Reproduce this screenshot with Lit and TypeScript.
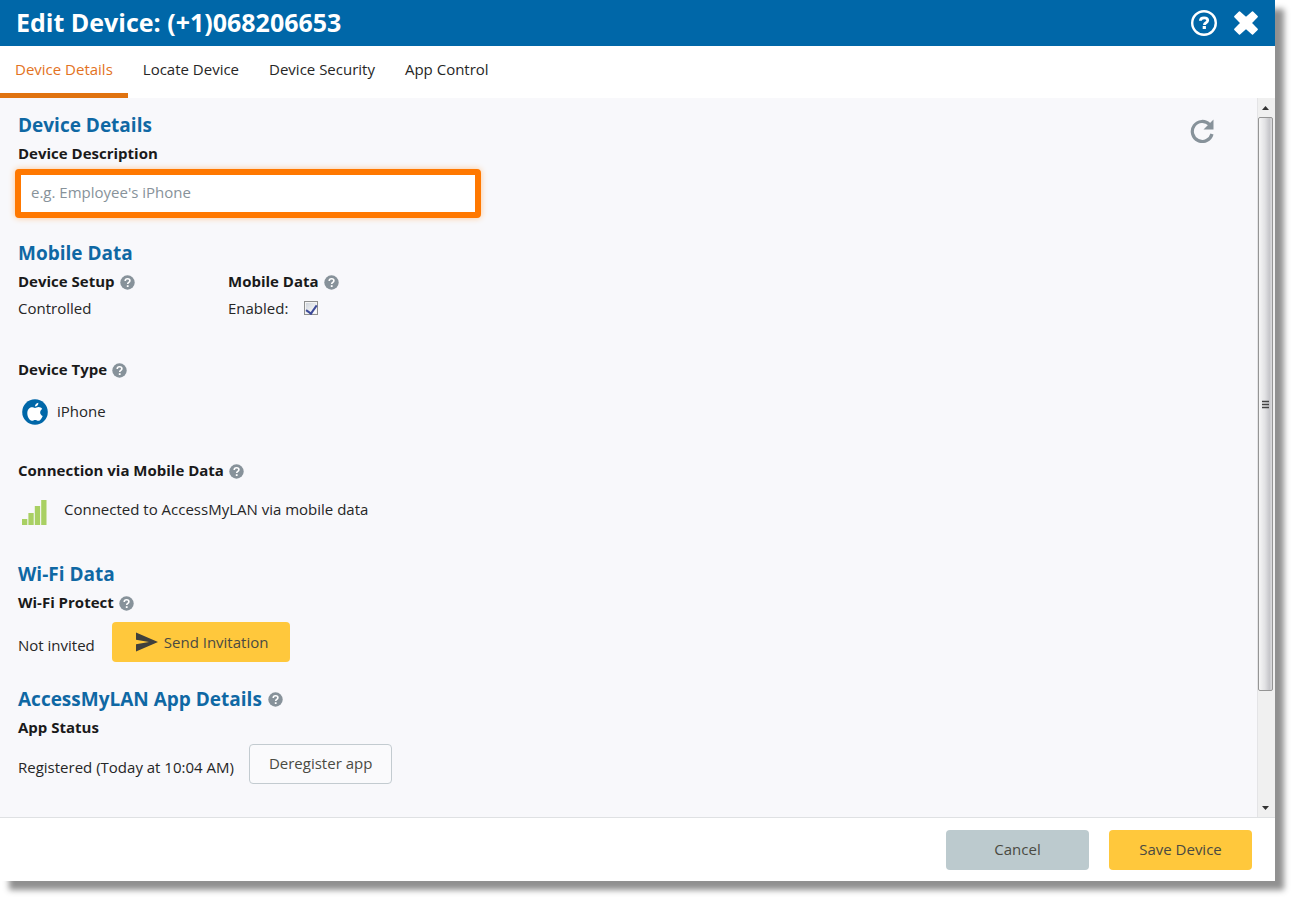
import { LitElement, html, css, svg } from "lit";
import { customElement, state } from "lit/decorators.js";

const TABS = ["Device Details", "Locate Device", "Device Security", "App Control"];

@customElement("help-button")
class HelpButton extends LitElement {
  static styles = css`
    :host {
      display: inline-flex;
    }
    .help {
      display: flex;
      padding: 0;
      border: 0;
      background: none;
      cursor: pointer;
    }
  `;

  render() {
    return html`<button class="help" type="button" aria-label="Help">
      <svg width="15" height="15" viewBox="0 0 15 15" aria-hidden="true">
        <circle cx="7.5" cy="7.5" r="7.2" fill="#87929a" />
        <path d="M5.2 5.9C5.2 4.5 6.2 3.7 7.6 3.7s2.3.8 2.3 2c0 1.7-2.2 1.7-2.2 3.3" fill="none" stroke="#fff" stroke-width="1.6" />
        <rect x="6.8" y="10.2" width="1.8" height="1.8" fill="#fff" />
      </svg>
    </button>`;
  }
}

@customElement("app-root")
class AppRoot extends LitElement {
  @state() private tab = 0;

  static styles = css`
    :host {
      display: block;
      box-sizing: border-box;
      height: 100vh;
      padding: 0 18px 18px 0;
      background: #fff;
      color: #262626;
      font: 15px/18px "Open Sans", "Noto Sans", sans-serif;
      overflow: hidden;
    }
    * {
      box-sizing: border-box;
    }
    button,
    input {
      font: inherit;
      color: inherit;
    }
    h1,
    h2,
    h3,
    p {
      margin: 0;
    }
    .dialog {
      display: flex;
      flex-direction: column;
      height: 100%;
      background: #fff;
      box-shadow: 9px 9px 6px #909090;
    }
    .titlebar {
      display: flex;
      align-items: center;
      justify-content: space-between;
      height: 46px;
      flex: none;
      padding: 0 16px;
      background: #0067a8;
      color: #fff;
    }
    .title {
      padding-bottom: 2px;
      font-size: 25px;
      line-height: 32px;
      font-weight: 700;
    }
    .actions {
      display: flex;
      align-items: center;
      gap: 15px;
    }
    .icon-button {
      display: flex;
      padding: 0;
      border: 0;
      background: none;
      cursor: pointer;
    }
    .tabs {
      display: flex;
      flex: none;
      height: 52px;
    }
    .tab {
      padding: 0 15px 2px;
      border: 0;
      border-bottom: 5px solid transparent;
      background: none;
      cursor: pointer;
    }
    .tab[aria-selected="true"] {
      color: #e37222;
      border-bottom-color: #e07310;
    }
    .body {
      display: flex;
      flex: 1;
      min-height: 0;
      background: #f8f8fb;
      border-bottom: 1px solid #dfe1e3;
    }
    .content {
      display: flex;
      flex: 1;
      align-items: flex-start;
      justify-content: space-between;
      min-width: 0;
      padding: 15px 42px 0 18px;
      overflow: hidden;
    }
    .sections {
      display: flex;
      flex-direction: column;
      gap: 23px;
      flex: 1;
    }
    .heading {
      display: flex;
      align-items: center;
      gap: 6px;
      margin-bottom: 7px;
      font-size: 19px;
      line-height: 24px;
      font-weight: 700;
      color: #0f68a4;
    }
    .label {
      display: flex;
      align-items: center;
      gap: 5px;
      padding-bottom: 2px;
      font-size: 15px;
      line-height: 18px;
      font-weight: 700;
      color: #1a1a1a;
    }
    .label help-button {
      margin-top: 2px;
    }
    .description {
      display: block;
      width: 466px;
      max-width: 100%;
      height: 49px;
      margin: 5px -3px 0;
      padding: 0 10px 3px;
      border: 6px solid #ff7800;
      border-radius: 4px;
      outline: 0;
      background: #fff;
      box-shadow: 0 0 6px #ffc690;
    }
    .description::placeholder {
      color: #87929a;
      opacity: 1;
    }
    .columns {
      display: grid;
      grid-template-columns: 210px 210px;
      row-gap: 7px;
      margin-bottom: 43px;
    }
    .enabled {
      display: flex;
      align-items: center;
      gap: 16px;
    }
    .check {
      appearance: none;
      width: 14px;
      height: 14px;
      margin: 0;
      padding: 1px;
      border: 1px solid #8e8f8f;
      background: linear-gradient(135deg, #d0d5dc, #fff) content-box, #f4f4f4;
    }
    .check:checked::before {
      content: "";
      display: block;
      width: 5px;
      height: 9px;
      margin: 0 auto;
      border: solid #3d4a98;
      border-width: 0 2px 2px 0;
      transform: rotate(35deg);
    }
    .device {
      display: flex;
      align-items: center;
      gap: 9px;
      height: 26px;
      margin: 19px 4px 36px;
    }
    .device-name {
      padding-bottom: 2px;
    }
    .connection {
      display: flex;
      align-items: flex-start;
      gap: 17px;
      margin: 19px 4px 13px;
    }
    .row {
      display: flex;
      align-items: center;
      gap: 15px;
      padding-top: 6px;
    }
    .invite {
      gap: 17px;
      padding: 9px 0 2px;
    }
    .status {
      padding-top: 6px;
    }
    .button {
      display: flex;
      align-items: center;
      justify-content: center;
      gap: 6px;
      min-width: 143px;
      height: 40px;
      padding: 0 19px 2px;
      border: 0;
      border-radius: 4px;
      background: #ffc83c;
      color: #4a4a42;
      cursor: pointer;
    }
    .invite .button {
      padding: 0 22px 1px;
    }
    .outline {
      border: 1px solid #c3cbd0;
      background: #fafafc;
    }
    .muted {
      background: #bccace;
    }
    .refresh {
      margin-top: 6px;
    }
    .scrollbar {
      display: flex;
      flex-direction: column;
      flex: none;
      width: 18px;
      padding-right: 2px;
      border-left: 1px solid #e4e4e6;
      background: #f0f0f0;
    }
    .arrow {
      display: flex;
      justify-content: center;
      align-items: center;
      height: 19px;
      flex: none;
    }
    .track {
      flex: 1;
      min-height: 0;
    }
    .thumb {
      display: flex;
      align-items: center;
      justify-content: center;
      height: 84.3%;
      border: 1px solid #959595;
      border-radius: 2px;
      background: linear-gradient(90deg, #f6f6f6, #e2e2e4 45%, #c6c6ca 80%, #dcdcde);
    }
    .footer {
      display: flex;
      align-items: center;
      justify-content: flex-end;
      gap: 20px;
      flex: none;
      height: 63px;
      padding: 0 23px;
    }
  `;

  private titleIcons() {
    return html`
      <button class="icon-button" type="button" aria-label="Help">
        <svg width="28" height="28" viewBox="0 0 28 28" aria-hidden="true">
          <circle cx="14" cy="14" r="11.8" fill="none" stroke="#fff" stroke-width="2.4" />
          <path d="M10.4 11.8c0-1.8 1.5-2.9 3.7-2.9 2.1 0 3.6 1 3.6 2.7 0 2.2-3.3 2-3.3 4.3" fill="none" stroke="#fff" stroke-width="2.8" />
          <rect x="12.7" y="17" width="3.2" height="3" fill="#fff" />
        </svg>
      </button>
      <button class="icon-button" type="button" aria-label="Close">
        <svg width="26" height="26" viewBox="0 0 26 26" aria-hidden="true">
          <path d="M6.5 2 13 7.8l6.5-5.8 4.6 4.6L18 13l6.1 6.4-4.6 4.6L13 18.2l-6.5 5.8-4.6-4.6L8 13 1.9 6.6z" fill="#fff" stroke="#fff" stroke-width="1.6" stroke-linejoin="round" />
        </svg>
      </button>
    `;
  }

  render() {
    return html`
      <div class="dialog" role="dialog" aria-labelledby="title">
        <header class="titlebar">
          <h1 class="title" id="title">Edit Device: (+1)068206653</h1>
          <div class="actions">${this.titleIcons()}</div>
        </header>

        <nav class="tabs" role="tablist">
          ${TABS.map(
            (name, i) => html`<button
              class="tab"
              type="button"
              role="tab"
              aria-selected=${i === this.tab ? "true" : "false"}
              @click=${() => (this.tab = i)}
            >${name}</button>`
          )}
        </nav>

        <div class="body">
          <main class="content">
            <div class="sections">
              <section>
                <h2 class="heading">Device Details</h2>
                <label class="label" for="description">Device Description</label>
                <input class="description" id="description" type="text" placeholder="e.g. Employee's iPhone" />
              </section>

              <section>
                <h2 class="heading">Mobile Data</h2>
                <div class="columns">
                  <h3 class="label">Device Setup <help-button></help-button></h3>
                  <h3 class="label">Mobile Data <help-button></help-button></h3>
                  <p>Controlled</p>
                  <div class="enabled">
                    <label for="enabled">Enabled:</label>
                    <input class="check" id="enabled" type="checkbox" checked />
                  </div>
                </div>
                <h3 class="label">Device Type <help-button></help-button></h3>
                <div class="device">
                  <svg width="26" height="26" viewBox="0 0 26 26" aria-hidden="true">
                    <circle cx="13" cy="13" r="12.8" fill="#0067a8" />
                    <path d="M13 8.900c1.100 0 2-.8 3.500-.8 1.600 0 2.900.7 3.700 1.900-3 1.900-2.500 5.700.5 7-.9 2.400-2.500 4.800-4.200 4.800-1.300 0-1.900-.8-3.300-.8s-2.100.8-3.400.8c-2.200 0-4.500-4-4.500-7.500 0-3.700 2.100-6.100 4.600-6.100 1.300 0 2.100.7 3.100.7z" fill="#fff" />
                    <path d="M12.900 7.600c0-2 1.500-3.700 3.500-3.900.1 2.100-1.500 3.900-3.500 3.900z" fill="#fff" />
                  </svg>
                  <span class="device-name">iPhone</span>
                </div>
                <h3 class="label">Connection via Mobile Data <help-button></help-button></h3>
                <div class="connection">
                  <svg width="25" height="26" viewBox="0 0 25 26" aria-hidden="true">
                    ${[6, 12, 19, 25].map(
                      (h, i) => svg`<rect x=${i * 6.4} y=${25 - h} width="5.3" height=${h} fill="#a9d063" />`
                    )}
                  </svg>
                  <span>Connected to AccessMyLAN via mobile data</span>
                </div>
              </section>

              <section>
                <h2 class="heading">Wi-Fi Data</h2>
                <h3 class="label">Wi-Fi Protect <help-button></help-button></h3>
                <div class="row invite">
                  <span class="status">Not invited</span>
                  <button class="button" type="button">
                    <svg width="24" height="20" viewBox="0 0 24 20" aria-hidden="true">
                      <path d="M2 .5 24 10 2 19.5v-7.300L15 10 2 7.800z" fill="#40403c" />
                    </svg>
                    Send Invitation
                  </button>
                </div>
              </section>

              <section>
                <h2 class="heading">AccessMyLAN App Details <help-button></help-button></h2>
                <h3 class="label">App Status</h3>
                <div class="row">
                  <span class="status">Registered (Today at 10:04 AM)</span>
                  <button class="button outline" type="button">Deregister app</button>
                </div>
              </section>
            </div>

            <button class="icon-button refresh" type="button" aria-label="Refresh">
              <svg width="26" height="24" viewBox="0 0 26 24" aria-hidden="true">
                <path d="M20.5 5.5A10 10 0 1 0 23 15" fill="none" stroke="#87929a" stroke-width="3.2" />
                <path d="M24.5.5V10.5H14.5z" fill="#87929a" />
              </svg>
            </button>
          </main>

          <div class="scrollbar" aria-hidden="true">
            <div class="arrow"><svg width="7" height="4" viewBox="0 0 7 4"><path d="M0 4 3.5 0 7 4z" fill="#333" /></svg></div>
            <div class="track">
              <div class="thumb">
                <svg width="8" height="9" viewBox="0 0 8 9"><path d="M0 1.5h7M0 4.5h7M0 7.5h7" stroke="#444" stroke-width="1.5" /></svg>
              </div>
            </div>
            <div class="arrow"><svg width="7" height="4" viewBox="0 0 7 4"><path d="M0 0 3.5 4 7 0z" fill="#333" /></svg></div>
          </div>
        </div>

        <footer class="footer">
          <button class="button muted" type="button">Cancel</button>
          <button class="button" type="button">Save Device</button>
        </footer>
      </div>
    `;
  }
}
